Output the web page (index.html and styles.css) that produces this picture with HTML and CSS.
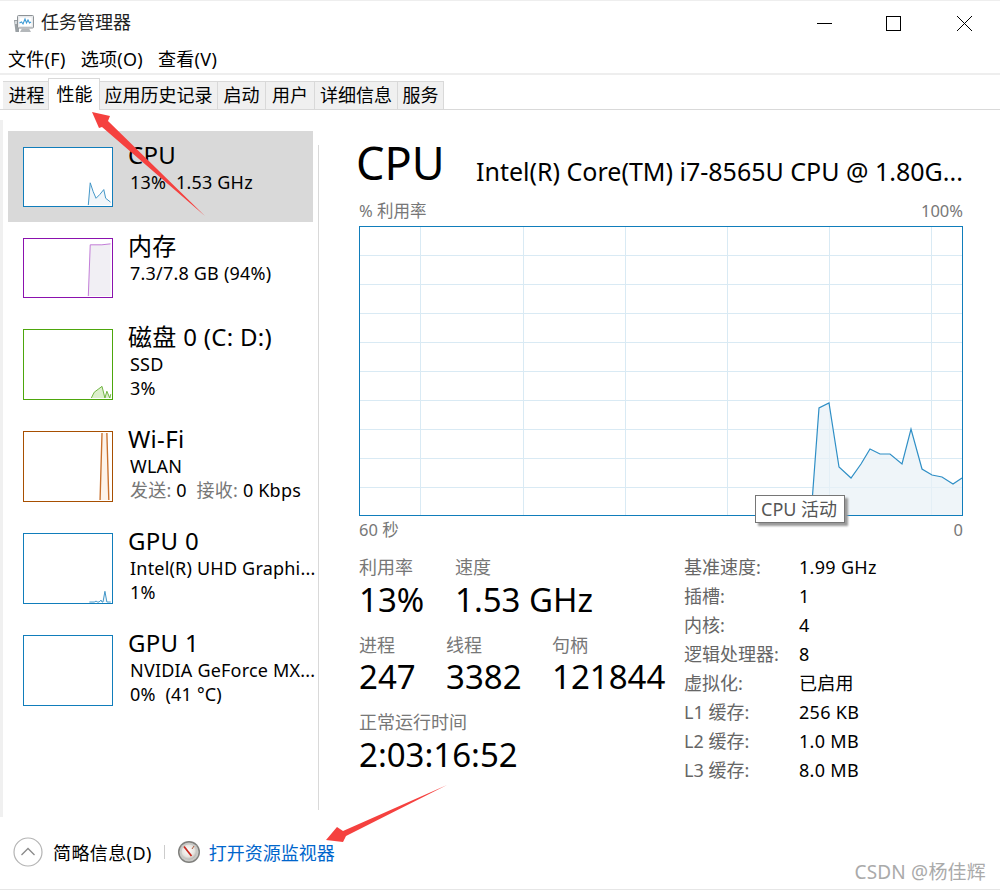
FILE: index.html
```html
<!DOCTYPE html>
<html lang="zh-CN">
<head>
<meta charset="utf-8">
<title>任务管理器</title>
<link rel="stylesheet" href="styles.css">
</head>
<body>
<div class="window">
  <header class="titlebar">
    <svg class="app-icon" width="22" height="22" viewBox="0 0 22 22">
      <path d="M1 7h5v12H2.500z" fill="#9aa0a4"/>
      <path d="M2 8h3v3H2z" fill="#d5dadd"/>
      <rect x="4.500" y="2.500" width="16" height="12.500" rx="1" fill="#e8eaec" stroke="#8d9296"/>
      <rect x="6.500" y="4.500" width="12" height="8.500" fill="#fff"/>
      <path d="M6.500 10l2-1 1.500 2 2-5 1.500 4 1.500-3 1.500 3 1.500-1" fill="none" stroke="#3c9bd6" stroke-width="1.100"/>
      <path d="M9 15.500h7l2 3.500H7z" fill="#b4b8bb"/>
    </svg>
    <span class="app-title">任务管理器</span>
    <div class="controls">
      <svg class="ctl-min" width="15" height="15" viewBox="0 0 15 15"><path d="M0 7.500h15" stroke="#000" stroke-width="1"/></svg>
      <svg class="ctl-max" width="15" height="15" viewBox="0 0 15 15"><rect x=".5" y=".5" width="14" height="14" fill="none" stroke="#000"/></svg>
      <svg class="ctl-close" width="15" height="15" viewBox="0 0 15 15"><path d="M0 0l15 15M15 0L0 15" stroke="#000" stroke-width="1"/></svg>
    </div>
  </header>
  <nav class="menubar">
    <span>文件(F)</span><span>选项(O)</span><span>查看(V)</span>
  </nav>
  <div class="tabs">
    <span class="tab">进程</span>
    <span class="tab tab-active">性能</span>
    <span class="tab">应用历史记录</span>
    <span class="tab">启动</span>
    <span class="tab">用户</span>
    <span class="tab">详细信息</span>
    <span class="tab">服务</span>
  </div>
  <main class="main">
    <aside class="sidebar">
      <div class="item item-short item-selected">
        <svg class="thumb thumb-s blue" viewBox="0 0 90 60"><path class="fill-blue" d="M66 59L68 36 71 45 74 52 78 48 82 43 84 52 89 56V59z"/><path class="line-blue" d="M66 59L68 36 71 45 74 52 78 48 82 43 84 52 89 56"/></svg>
        <div class="item-text"><div class="item-name">CPU</div><div class="item-sub">13%&nbsp; 1.53 GHz</div></div>
      </div>
      <div class="item item-short">
        <svg class="thumb thumb-s purple" viewBox="0 0 90 60"><path class="fill-purple" d="M66 59L68 6 80 6 89 5V59z"/><path class="line-purple" d="M66 59L68 6 80 6 89 5"/></svg>
        <div class="item-text"><div class="item-name">内存</div><div class="item-sub">7.3/7.8 GB (94%)</div></div>
      </div>
      <div class="item">
        <svg class="thumb thumb-l green" viewBox="0 0 90 71"><path class="fill-green" d="M69 70L72 64 76 61 80 58 83 70 85 63 88 70 89 66V70z"/><path class="line-green" d="M69 70L72 64 76 61 80 58 83 70 85 63 88 70 89 66"/></svg>
        <div class="item-text"><div class="item-name">磁盘 0 (C: D:)</div><div class="item-sub">SSD</div><div class="item-sub">3%</div></div>
      </div>
      <div class="item">
        <svg class="thumb thumb-l orange" viewBox="0 0 90 71"><path class="fill-orange" d="M78 70L80 1H85L87 70z"/><path class="line-orange" d="M78 70L80 1M85 1L87 70"/></svg>
        <div class="item-text"><div class="item-name">Wi-Fi</div><div class="item-sub">WLAN</div><div class="item-sub"><span class="muted">发送:</span> 0&nbsp; <span class="muted">接收:</span> 0 Kbps</div></div>
      </div>
      <div class="item">
        <svg class="thumb thumb-l blue" viewBox="0 0 90 71"><path class="fill-blue" d="M67 70H72L74 69 75 70H77L79 68 80 70 81 70 83 59 85 70H89V70z"/><path class="line-blue" d="M67 70H72L74 69 75 70H77L79 68 80 70 81 70 83 59 85 70H89"/></svg>
        <div class="item-text"><div class="item-name">GPU 0</div><div class="item-sub">Intel(R) UHD Graphi...</div><div class="item-sub">1%</div></div>
      </div>
      <div class="item">
        <svg class="thumb thumb-l blue" viewBox="0 0 90 71"></svg>
        <div class="item-text"><div class="item-name">GPU 1</div><div class="item-sub">NVIDIA GeForce MX...</div><div class="item-sub">0%&nbsp; (41 °C)</div></div>
      </div>
    </aside>
    <div class="divider"></div>
    <section class="detail">
      <div class="head">
        <span class="head-name">CPU</span>
        <span class="head-model">Intel(R) Core(TM) i7-8565U CPU @ 1.80G...</span>
      </div>
      <div class="axis axis-top"><span>% 利用率</span><span>100%</span></div>
      <div class="graph">
        <svg class="graph-svg" width="605" height="291" viewBox="359 226 605 291">
          <g class="grid">
            <path d="M420.500 226V516M523.500 226V516M625.500 226V516M727.500 226V516M829.500 226V516M931.500 226V516"/>
            <path d="M360 255.500H962M360 284.500H962M360 313.500H962M360 342.500H962M360 371.500H962M360 400.500H962M360 429.500H962M360 458.500H962M360 487.500H962"/>
          </g>
          <path class="graph-fill" d="M811 516L819 408 829 403 839 467 851 478 861 464 870 449 880 454 890 454 902 464 911 429 922 469 932 475 942 477 953 484 962 478V516z"/>
          <path class="graph-line" d="M811 516L819 408 829 403 839 467 851 478 861 464 870 449 880 454 890 454 902 464 911 429 922 469 932 475 942 477 953 484 962 478"/>
          <rect class="graph-frame" x="359.500" y="226.500" width="603" height="289"/>
        </svg>
        <div class="tooltip">CPU 活动</div>
      </div>
      <div class="axis axis-bottom"><span>60 秒</span><span>0</span></div>
      <div class="stats">
        <div class="stats-left">
          <div class="stat-row">
            <div class="stat stat-util"><div class="stat-label">利用率</div><div class="stat-value">13%</div></div>
            <div class="stat"><div class="stat-label">速度</div><div class="stat-value">1.53 GHz</div></div>
          </div>
          <div class="stat-row">
            <div class="stat stat-proc"><div class="stat-label">进程</div><div class="stat-value">247</div></div>
            <div class="stat stat-thread"><div class="stat-label">线程</div><div class="stat-value">3382</div></div>
            <div class="stat"><div class="stat-label">句柄</div><div class="stat-value">121844</div></div>
          </div>
          <div class="stat-row">
            <div class="stat"><div class="stat-label">正常运行时间</div><div class="stat-value">2:03:16:52</div></div>
          </div>
        </div>
        <dl class="specs">
          <dt>基准速度:</dt><dd>1.99 GHz</dd>
          <dt>插槽:</dt><dd>1</dd>
          <dt>内核:</dt><dd>4</dd>
          <dt>逻辑处理器:</dt><dd>8</dd>
          <dt>虚拟化:</dt><dd>已启用</dd>
          <dt>L1 缓存:</dt><dd>256 KB</dd>
          <dt>L2 缓存:</dt><dd>1.0 MB</dd>
          <dt>L3 缓存:</dt><dd>8.0 MB</dd>
        </dl>
      </div>
    </section>
  </main>
  <footer class="footer">
    <svg class="chevron" width="30" height="30" viewBox="0 0 30 30"><circle cx="15" cy="15" r="14" fill="none" stroke="#b4b4b4" stroke-width="1.200"/><path d="M8.500 18L15 11.500 21.500 18" fill="none" stroke="#8a8a8a" stroke-width="1.300"/></svg>
    <span class="brief">简略信息(D)</span>
    <span class="foot-sep"></span>
    <svg class="monitor" width="24" height="24" viewBox="0 0 24 24">
      <defs><radialGradient id="dial" cx=".45" cy=".4" r=".7"><stop offset="0" stop-color="#fff"/><stop offset=".6" stop-color="#e6e3de"/><stop offset="1" stop-color="#9b9b98"/></radialGradient></defs>
      <circle cx="12" cy="12" r="11" fill="#7f7f7c"/>
      <circle cx="12" cy="12" r="9.600" fill="#c9c9c6"/>
      <circle cx="12" cy="12" r="7.500" fill="url(#dial)"/>
      <path d="M7 6.500l7.500 9.500" stroke="#c8281e" stroke-width="1.800"/>
      <path d="M15 9l2-3" stroke="#b05a40" stroke-width="1"/>
    </svg>
    <a class="link">打开资源监视器</a>
    <span class="watermark">CSDN @杨佳辉</span>
  </footer>
  <svg class="annot annot-a" width="120" height="110" viewBox="90 110 120 110"><polygon points="92,112 110,116 108,121 205,216 102,127 99,128"/></svg>
  <svg class="annot annot-b" width="125" height="60" viewBox="325 784 125 60"><polygon points="326,840 337,827 343,831 447,785 346,836 343,842"/></svg>
</div>
</body>
</html>
```
FILE: styles.css
```css
* { box-sizing: border-box; }
html, body { margin: 0; padding: 0; }
body {
  font-family: "Noto Sans", "Noto Sans CJK SC", sans-serif;
  color: #000;
  background: #fff;
}
.window {
  position: relative;
  width: 1000px;
  height: 890px;
  overflow: hidden;
  display: flex;
  flex-direction: column;
  border-top: 1px solid #eee;
  border-bottom: 1px solid #e6e6e6;
}
.titlebar {
  height: 44px;
  display: flex;
  align-items: center;
  padding-left: 13px;
  flex: none;
}
.app-icon { flex: none; margin-right: 6px; margin-top: 2px; }
.app-title { font-size: 18px; line-height: 24px; color: #222; margin-top: -2px; }
.controls {
  margin-left: auto;
  display: flex;
  padding-right: 28px;
}
.ctl-max { margin-left: 54px; }
.ctl-close { margin-left: 56px; }
.menubar {
  height: 28px;
  display: flex;
  gap: 15px;
  padding-left: 8px;
  font-size: 18px;
  letter-spacing: .3px;
  line-height: 29px;
  flex: none;
  border-bottom: 2px solid #eee;
  box-sizing: content-box;
}
.tabs {
  height: 31px;
  margin-top: 3px;
  display: flex;
  align-items: flex-end;
  padding-left: 3px;
  flex: none;
  border-bottom: 1px solid #d9d9d9;
  box-sizing: content-box;
  position: relative;
}
.tab {
  height: 28px;
  font-size: 18px;
  line-height: 27px;
  text-align: center;
  background: #f0f0f0;
  border: 1px solid #d9d9d9;
  border-bottom: 0;
  border-left: 0;
  white-space: nowrap;
  flex: none;
}
.tab:nth-child(1) { width: 46px; padding-left: 2px; }
.tab:nth-child(3) { width: 118px; }
.tab:nth-child(4) { width: 48px; }
.tab:nth-child(5) { width: 49px; }
.tab:nth-child(6) { width: 83px; }
.tab:nth-child(7) { width: 46px; }
.tab-active {
  width: 52px;
  height: 32px;
  line-height: 31px;
  margin-bottom: -1px;
  background: #fff;
  border-left: 1px solid #d9d9d9;
  padding-bottom: 3px;
  padding-left: 1px;
  margin-left: -1px;
}
.main {
  height: 697px;
  margin-top: 10px;
  display: flex;
  flex: none;
  border-left: 3px solid #f0f0f0;
}
.sidebar {
  width: 315px;
  padding: 11px 0 0 5px;
  flex: none;
}
.item {
  width: 305px;
  height: 102px;
  display: flex;
  padding: 16px 0 0 15px;
  white-space: nowrap;
}
.item-short { height: 91px; }
.item-selected { background: #d9d9d9; }
.thumb {
  width: 90px;
  height: 71px;
  flex: none;
  border-width: 1px;
  border-style: solid;
  background: #fff;
  overflow: hidden;
}
.thumb-s { height: 60px; }
.blue { border-color: #117dbb; }
.purple { border-color: #8b12ae; }
.green { border-color: #4da60c; }
.orange { border-color: #a74f01; }
.fill-blue { fill: #f1f6fa; }
.line-blue { fill: none; stroke: #3c93c6; stroke-width: 1; }
.fill-purple { fill: #f1eff4; }
.line-purple { fill: none; stroke: #c078d6; stroke-width: 1; }
.fill-green { fill: #dbefcb; }
.line-green { fill: none; stroke: #6db33f; stroke-width: 1; }
.fill-orange { fill: #fdf3ea; }
.line-orange { fill: none; stroke: #c9702c; stroke-width: 1.400; }
.item-text { margin-left: 15px; margin-top: -8px; }
.item-name { font-size: 24px; line-height: 31px; letter-spacing: .3px; }
.item-sub { font-size: 18px; line-height: 24px; letter-spacing: .2px; margin-left: 2px; }
.muted { color: #777; }
.divider {
  width: 1px;
  margin-top: 25px;
  margin-bottom: 7px;
  background: #d9d9d9;
  flex: none;
}
.detail {
  width: 605px;
  margin-left: 40px;
  flex: none;
  position: relative;
}
.head {
  height: 66px;
  margin-left: -3px;
  display: flex;
  align-items: baseline;
  padding-top: 11px;
  white-space: nowrap;
}
.head-name { font-size: 45px; line-height: 64px; width: 120px; flex: none; }
.head-model { font-size: 25px; line-height: 32px; position: relative; top: 1px; }
.axis {
  display: flex;
  justify-content: space-between;
  font-size: 16.500px;
  line-height: 22px;
  color: #777;
  width: 604px;
}
.axis-top { margin-top: 14px; height: 26px; }
.axis-bottom { height: 22px; margin-top: 2px; }
.graph { position: relative; height: 291px; }
.graph-svg { display: block; }
.grid path { fill: none; stroke: #d9eaf4; stroke-width: 1; }
.graph-fill { fill: #e8f1f7; fill-opacity: .7; }
.graph-line { fill: none; stroke: #2f8fc6; stroke-width: 1.200; }
.graph-frame { fill: none; stroke: #117dbb; stroke-width: 1; }
.tooltip {
  position: absolute;
  left: 396px;
  top: 269px;
  width: 90px;
  height: 28px;
  border: 1px solid #767676;
  background: #fff;
  box-shadow: 3px 3px 2px #9a9a9a;
  font-size: 18px;
  line-height: 26px;
  color: #555;
  padding-left: 5px;
  white-space: nowrap;
}
.stats {
  display: flex;
  margin-top: 13px;
  white-space: nowrap;
}
.stats-left { width: 325px; flex: none; }
.stat-row { display: flex; height: 77.500px; }
.stat-util { width: 96px; }
.stat-proc { width: 87px; }
.stat-thread { width: 106px; }
.stat-label { font-size: 18px; line-height: 26px; color: #777; }
.stat-value { font-size: 33px; line-height: 38px; margin-top: .5px; }
.specs {
  margin: 0;
  display: grid;
  grid-template-columns: 115px auto;
  grid-auto-rows: 29px;
  font-size: 18px;
  line-height: 26px;
}
.specs dt { color: #666; }
.specs dd { margin: 0; letter-spacing: .3px; }
.footer {
  flex: 1;
  display: flex;
  align-items: center;
  padding: 0 0 3px 13px;
  position: relative;
}
.chevron { flex: none; }
.brief { font-size: 18px; letter-spacing: .4px; margin-left: 10px; white-space: nowrap; }
.foot-sep { width: 1px; height: 14px; background: #ccc; margin: 0 12px; flex: none; }
.monitor { flex: none; }
.link { font-size: 18px; color: #0066cc; margin-left: 8px; white-space: nowrap; }
.watermark {
  position: absolute;
  right: 14px;
  bottom: 5px;
  font-size: 19px;
  letter-spacing: .2px;
  line-height: 24px;
  color: #aaa;
  white-space: nowrap;
}
.annot { position: absolute; fill: #f5413f; pointer-events: none; }
.annot-a { left: 90px; top: 109px; }
.annot-b { left: 325px; top: 783px; }
```
